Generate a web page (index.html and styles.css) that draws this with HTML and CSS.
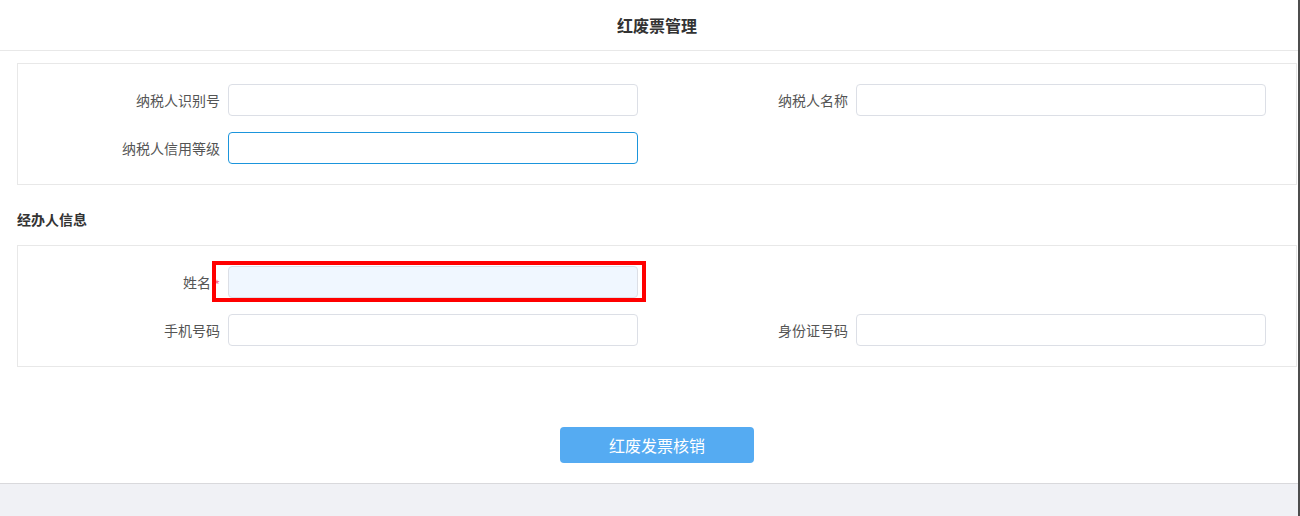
FILE: index.html
```html
<!DOCTYPE html>
<html lang="zh-CN">
<head>
<meta charset="utf-8">
<title>红废票管理</title>
<link rel="stylesheet" href="styles.css">
</head>
<body>
<div class="page">
  <div class="main">
    <header class="header">红废票管理</header>
    <div class="content">
      <section class="box">
        <div class="grid">
          <div class="item"><label class="label">纳税人识别号</label><input class="input" type="text"></div>
          <div class="item"><label class="label">纳税人名称</label><input class="input" type="text"></div>
          <div class="item"><label class="label">纳税人信用等级</label><input class="input focus" type="text"></div>
        </div>
      </section>
      <h3 class="section-title">经办人信息</h3>
      <section class="box">
        <div class="grid">
          <div class="item marked"><label class="label">姓名<span class="req">*</span></label><input class="input filled" type="text"><div class="outline"></div></div>
          <div class="item empty"></div>
          <div class="item"><label class="label">手机号码</label><input class="input" type="text"></div>
          <div class="item"><label class="label">身份证号码</label><input class="input" type="text"></div>
        </div>
      </section>
      <div class="actions"><button class="btn" type="button">红废发票核销</button></div>
    </div>
  </div>
  <div class="footer"></div>
</div>
</body>
</html>
```

FILE: styles.css
```css
html, body {
  margin: 0;
  padding: 0;
  height: 100%;
}
body {
  font-family: "Noto Sans CJK SC", "Liberation Sans", sans-serif;
  background: #f0f1f5;
  color: #333;
  overflow: hidden;
}
.page {
  width: 1298px;
  height: 516px;
  border-right: 2px solid #4d4d4d;
  display: flex;
  flex-direction: column;
}
.main {
  background: #fff;
  height: 484px;
  border-bottom: 1px solid #d9d9dc;
  box-sizing: border-box;
}
.header {
  height: 50px;
  line-height: 50px;
  padding-left: 16px;
  text-align: center;
  font-size: 16px;
  font-weight: bold;
  color: #333;
  border-bottom: 1px solid #e8e8e8;
}
.content {
  padding: 12px 1px 0 17px;
}
.box {
  border: 1px solid #e8e8e8;
  padding: 20px 0;
}
.grid {
  display: grid;
  grid-template-columns: 620px 620px;
  column-gap: 8px;
  row-gap: 16px;
}
.item {
  display: flex;
  align-items: center;
  height: 32px;
  position: relative;
}
.label {
  width: 202px;
  margin-right: 8px;
  text-align: right;
  font-size: 14px;
  color: #555;
  white-space: nowrap;
}
.req {
  color: #f56c8c;
  margin-left: 3px;
  font-size: 13px;
  position: relative;
  top: 2px;
}
.input {
  width: 410px;
  height: 32px;
  box-sizing: border-box;
  border: 1px solid #dcdfe6;
  border-radius: 4px;
  background: #fff;
  padding: 0 10px;
  font-size: 14px;
  outline: none;
  margin: 0;
}
.input.focus {
  border-color: #1b95dc;
}
.input.filled {
  background: #f0f7ff;
}
.outline {
  position: absolute;
  left: 194px;
  top: -5px;
  width: 434px;
  height: 41px;
  border: 4px solid #ff0000;
  box-sizing: border-box;
  pointer-events: none;
}
.section-title {
  margin: 24px 0 16px;
  height: 20px;
  line-height: 20px;
  font-size: 14px;
  font-weight: bold;
  color: #333;
}
.actions {
  display: flex;
  justify-content: center;
  padding-top: 60px;
}
.btn {
  width: 194px;
  height: 36px;
  border: none;
  border-radius: 4px;
  background: #55abf2;
  color: #fff;
  font-family: "Noto Sans CJK SC", "Liberation Sans", sans-serif;
  font-size: 16px;
  cursor: pointer;
}
.footer {
  flex: 1;
  background: #f0f1f5;
}
```
